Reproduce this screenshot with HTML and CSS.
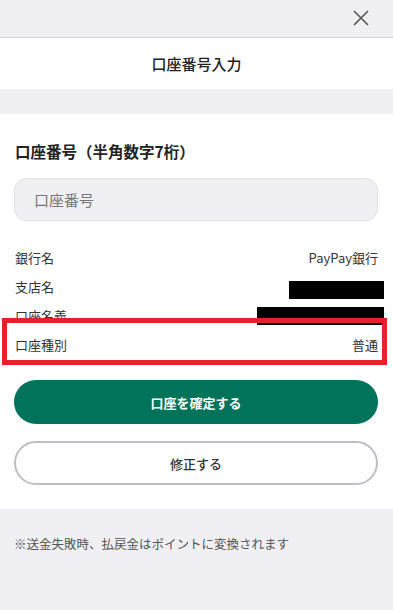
FILE: index.html
```html
<!DOCTYPE html>
<html lang="ja">
<head>
<meta charset="utf-8">
<link rel="stylesheet" href="styles.css">
</head>
<body>
<div class="topbar">
  <svg class="close" width="16" height="16" viewBox="0 0 16 16"><path d="M1 1L15 15M15 1L1 15" stroke="#555" stroke-width="1.6" fill="none"/></svg>
</div>
<div class="header">口座番号入力</div>
<div class="gap"></div>
<div class="card">
  <div class="section-title">口座番号（半角数字7桁）</div>
  <div class="input">口座番号</div>
  <div class="rows">
    <div class="row"><span>銀行名</span><span>PayPay銀行</span></div>
    <div class="row"><span>支店名</span><span class="redact redact-a"></span></div>
    <div class="row"><span>口座名義</span><span class="redact redact-b"></span></div>
    <div class="row row-hl"><span>口座種別</span><span>普通</span></div>
  </div>
  <div class="btn btn-primary">口座を確定する</div>
  <div class="btn btn-outline">修正する</div>
</div>
<div class="note">※送金失敗時、払戻金はポイントに変換されます</div>
</body>
</html>
```
FILE: styles.css
```css
* { box-sizing: border-box; }
html, body { margin: 0; padding: 0; }
body {
  width: 393px;
  height: 610px;
  overflow: hidden;
  background: #efeff4;
  font-family: "Noto Sans CJK JP", "Noto Sans", sans-serif;
  color: #222;
}
.topbar {
  height: 38px;
  border-bottom: 1px solid #d2d2d7;
  display: flex;
  justify-content: flex-end;
  align-items: center;
  padding-right: 24px;
}
.close { display: block; margin-top: -2px; }
.header {
  background: #fff;
  height: 51px;
  display: flex;
  align-items: center;
  justify-content: center;
  font-size: 15px;
  font-weight: 500;
  color: #222;
}
.gap { height: 25px; }
.card {
  background: #fff;
  padding: 25px 15px 24px 14px;
  height: 395px;
}
.section-title {
  font-size: 15.5px;
  font-weight: 700;
  line-height: 24px;
  margin-left: 1px;
}
.input {
  margin-top: 15px;
  height: 43px;
  border-radius: 12px;
  background: #efeff4;
  border: 1.5px solid #e2e2e8;
  display: flex;
  align-items: center;
  padding-left: 19px;
  font-size: 15px;
  color: #777;
}
.rows { margin-top: 22px; }
.row {
  height: 29px;
  display: flex;
  justify-content: space-between;
  align-items: center;
  font-size: 13px;
  color: #333;
  padding-left: 1px;
  margin-right: -6px;
  padding-right: 6px;
  position: relative;
}
.row-hl::after {
  content: "";
  position: absolute;
  left: -12px;
  right: -3px;
  top: -12px;
  bottom: -6px;
  border: 5px solid #e8202a;
}
.redact { display: block; background: #000; height: 18px; margin-right: -6px; }
.redact-a { width: 95px; margin-top: 7px; }
.redact-b { width: 127px; }
.btn {
  height: 44px;
  border-radius: 22px;
  display: flex;
  align-items: center;
  justify-content: center;
  font-size: 13px;
}
.btn-primary {
  margin-top: 21px;
  background: #00735a;
  color: #fff;
  font-weight: 700;
}
.btn-outline {
  margin-top: 17px;
  border: 2px solid #bdbdc4;
  color: #333;
  font-weight: 500;
}
.note {
  padding: 25px 14px;
  font-size: 12.5px;
  color: #555;
}
```
